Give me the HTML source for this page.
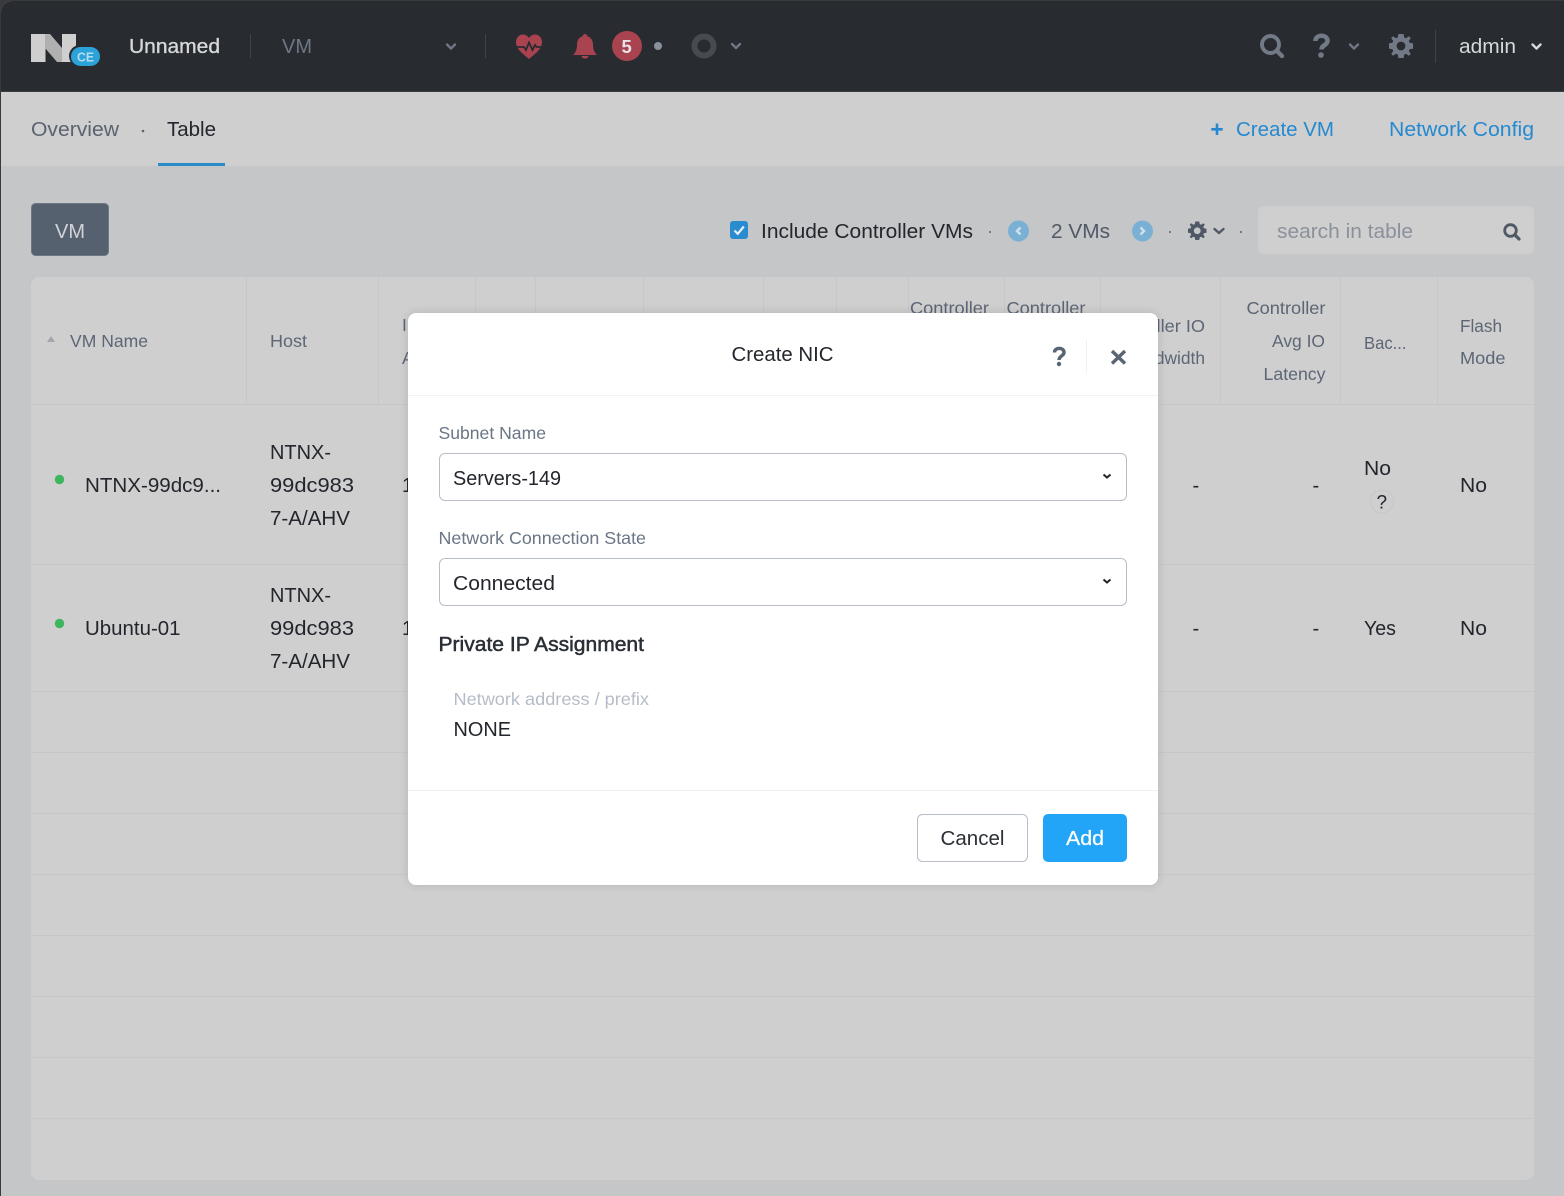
<!DOCTYPE html>
<html><head><meta charset="utf-8"><title>Create NIC</title>
<style>
html,body{margin:0;padding:0;background:#3a3a3c;width:1564px;height:1196px;overflow:hidden}
svg{display:block}
text{font-family:"Liberation Sans",sans-serif;font-size:20px;fill:#23262c;white-space:pre}
.h{font-size:17.5px;fill:#5c6675}
.l{font-size:17.5px;fill:#6a7686}
.c{fill:none;stroke-width:2.4;stroke-linecap:round;stroke-linejoin:round}
</style></head><body>
<svg width="1564" height="1196" viewBox="0 0 1564 1196" xmlns="http://www.w3.org/2000/svg">
<defs>
<clipPath id="win"><rect x="1" y="1" width="1573" height="1205" rx="11"/></clipPath>
<symbol id="gear" viewBox="-12 -12 24 24" overflow="visible">
<path fill-rule="evenodd" d="M-2.6-12H2.6L3.2-8.6 5.1-7.8 7.9-9.8 9.8-7.9 7.8-5.1 8.6-3.2 12-2.6V2.6L8.6 3.2 7.8 5.1 9.8 7.9 7.9 9.8 5.1 7.8 3.2 8.6 2.6 12H-2.6L-3.2 8.6-5.1 7.8-7.9 9.8-9.8 7.9-7.8 5.1-8.6 3.2-12 2.6V-2.6L-8.6-3.2-7.8-5.1-9.8-7.9-7.9-9.8-5.1-7.8-3.2-8.6ZM0-4.4A4.4 4.4 0 1 0 0 4.4 4.4 4.4 0 1 0 0-4.4Z"/>
</symbol>
</defs>
<g clip-path="url(#win)">
<rect width="1564" height="1196" fill="#c5c6c8"/>
<!-- top bar -->
<rect width="1564" height="92" fill="#282b30"/>
<rect y="91" width="1564" height="1" fill="#3a3e44"/>
<!-- logo -->
<rect x="31" y="34" width="14.500" height="28" fill="#cfcfcf"/>
<rect x="62" y="34" width="14" height="28" fill="#cfcfcf"/>
<path d="M45 34H50L62 48V62H57L45 48Z" fill="#b0b0b0"/>
<rect x="69" y="45" width="33" height="22" rx="11" fill="#282b30"/>
<rect x="71" y="47" width="29" height="19" rx="9.5" fill="#2ba3d8"/>
<text x="77" y="61.500" style="font-size:12.500px;fill:#b4dcef;font-weight:bold" textLength="17" lengthAdjust="spacingAndGlyphs">CE</text>
<text x="129" y="53" textLength="91" lengthAdjust="spacingAndGlyphs" style="fill:#d6d8db;stroke:#d6d8db;stroke-width:.35">Unnamed</text>
<rect x="250" y="34" width="1" height="24" fill="#3f434a"/>
<text x="282" y="53" textLength="30" lengthAdjust="spacingAndGlyphs" style="fill:#6f7785">VM</text>
<path class="c" d="M447 44.500L451 48.500 455 44.500" stroke="#6f7785"/>
<rect x="485" y="34" width="1" height="24" fill="#3f434a"/>
<!-- heart -->
<path d="M529 59C522 53 516 49 516 42 516 37.500 519.500 34.500 523 34.500 525.500 34.500 527.800 36 529 38 530.200 36 532.500 34.500 535 34.500 538.500 34.500 542 37.500 542 42 542 49 536 53 529 59Z" fill="#a94350"/>
<path d="M515 47H524L526 50 529 42.500 532.500 50 535 45 536.500 47H543" fill="none" stroke="#282b30" stroke-width="1.800"/>
<!-- bell -->
<path d="M573 55C575.500 52.500 577 50 577 44.500 577 40 579.500 37 582.700 36.300 582.700 34.800 583.700 34 585 34 586.300 34 587.300 34.800 587.300 36.300 590.500 37 593 40 593 44.500 593 50 594.500 52.500 597 55Z" fill="#a94350"/>
<path d="M581.500 56H588.500C588 59.500 582 59.500 581.500 56Z" fill="#a94350"/>
<circle cx="627" cy="46" r="15" fill="#a94350"/>
<text x="621.500" y="53" style="font-weight:bold;font-size:18.500px;fill:#e6e4e4">5</text>
<circle cx="658" cy="46" r="4" fill="#8a919c"/>
<circle cx="704" cy="46" r="9.500" fill="none" stroke="#474b51" stroke-width="6"/>
<path class="c" d="M732 44L736 48 740 44" stroke="#6f7785"/>
<!-- right icons -->
<circle cx="1270.500" cy="44.500" r="8.500" fill="none" stroke="#737a87" stroke-width="3.900"/>
<path d="M1277 51L1282 56" stroke="#737a87" stroke-width="4.400" stroke-linecap="round"/>
<path d="M1315.500 41C1315.500 34 1327.500 34 1327.500 41 1327.500 45 1321.500 45 1321.500 49.500" fill="none" stroke="#737a87" stroke-width="4.600"/>
<circle cx="1321" cy="55" r="2.800" fill="#737a87"/>
<path class="c" d="M1350 44.500L1354 48.500 1358 44.500" stroke="#6f7785"/>
<use href="#gear" x="1389" y="34" width="24" height="24" fill="#737a87"/>
<rect x="1435" y="30" width="1" height="33" fill="#3f434a"/>
<text x="1459" y="53" textLength="57" lengthAdjust="spacingAndGlyphs" style="fill:#d6d8db">admin</text>
<path class="c" d="M1532.500 44.500L1536.500 48.500 1540.500 44.500" stroke="#d6d8db"/>
<!-- sub bar -->
<rect y="92" width="1564" height="74" fill="#cfcfcf"/>
<text x="31" y="136" textLength="88" lengthAdjust="spacingAndGlyphs" style="fill:#5a6370">Overview</text>
<circle cx="143" cy="131" r="1.300" fill="#5a6370"/>
<text x="167" y="136" textLength="49" lengthAdjust="spacingAndGlyphs">Table</text>
<rect x="158" y="163" width="67" height="3" fill="#2a8cca"/>
<path d="M1217 123.500V135M1211.300 129.300H1222.700" stroke="#2589cf" stroke-width="2.600"/>
<text x="1236" y="136" textLength="98" lengthAdjust="spacingAndGlyphs" style="fill:#2589cf">Create VM</text>
<text x="1389" y="136" textLength="145" lengthAdjust="spacingAndGlyphs" style="fill:#2589cf">Network Config</text>
<!-- toolbar -->
<rect x="31.500" y="203.500" width="77" height="52" rx="4" fill="#566170" stroke="#6d7785"/>
<text x="55" y="238" textLength="30" lengthAdjust="spacingAndGlyphs" style="fill:#d0d3d7">VM</text>
<rect x="730" y="221" width="18" height="18" rx="3" fill="#2a8cd0"/>
<path d="M734.500 230.500L737.800 233.800 743.800 226.500" fill="none" stroke="#e8f1f8" stroke-width="2.200"/>
<text x="761" y="238" textLength="212" lengthAdjust="spacingAndGlyphs">Include Controller VMs</text>
<circle cx="990" cy="232" r="1" fill="#5a6370"/>
<circle cx="1018.500" cy="231" r="10.500" fill="#7ab0d4"/>
<path d="M1020.500 227.500L1017 231 1020.500 234.500" fill="none" stroke="#cfe0ec" stroke-width="2.400"/>
<text x="1051" y="238" textLength="59" lengthAdjust="spacingAndGlyphs" style="fill:#505966">2 VMs</text>
<circle cx="1142.500" cy="231" r="10.500" fill="#7ab0d4"/>
<path d="M1140.500 227.500L1144 231 1140.500 234.500" fill="none" stroke="#cfe0ec" stroke-width="2.400"/>
<circle cx="1170" cy="232" r="1" fill="#5a6370"/>
<use href="#gear" x="1188" y="221.500" width="18.500" height="18.500" fill="#4f5865"/>
<path class="c" d="M1214.500 229L1219 233 1223.500 229" stroke="#4f5865"/>
<circle cx="1241" cy="232" r="1" fill="#5a6370"/>
<rect x="1258" y="206" width="276" height="48" rx="6" fill="#cfcfcf"/>
<text x="1277" y="238" textLength="136" lengthAdjust="spacingAndGlyphs" style="fill:#8b919b">search in table</text>
<circle cx="1510.500" cy="230.500" r="5.800" fill="none" stroke="#4f5865" stroke-width="2.800"/>
<path d="M1515 235L1519 239" stroke="#4f5865" stroke-width="3.200" stroke-linecap="round"/>
<!-- table -->
<rect x="31" y="277" width="1503" height="903" rx="8" fill="#cfcfcf"/>
<g fill="#c7c7c7">
<rect x="31" y="404" width="1503" height="1"/>
<rect x="31" y="564" width="1503" height="1"/>
<rect x="31" y="691" width="1503" height="1"/>
<rect x="31" y="752" width="1503" height="1"/>
<rect x="31" y="813" width="1503" height="1"/>
<rect x="31" y="874" width="1503" height="1"/>
<rect x="31" y="935" width="1503" height="1"/>
<rect x="31" y="996" width="1503" height="1"/>
<rect x="31" y="1057" width="1503" height="1"/>
<rect x="31" y="1118" width="1503" height="1"/>
<rect x="246" y="277" width="1" height="127"/>
<rect x="378" y="277" width="1" height="127"/>
<rect x="475" y="277" width="1" height="127"/>
<rect x="535" y="277" width="1" height="127"/>
<rect x="643" y="277" width="1" height="127"/>
<rect x="763" y="277" width="1" height="127"/>
<rect x="836" y="277" width="1" height="127"/>
<rect x="908" y="277" width="1" height="127"/>
<rect x="1004" y="277" width="1" height="127"/>
<rect x="1100" y="277" width="1" height="127"/>
<rect x="1220" y="277" width="1" height="127"/>
<rect x="1340" y="277" width="1" height="127"/>
<rect x="1437" y="277" width="1" height="127"/>
</g>
<path d="M47 342L51 336 55 342Z" fill="#a2a5aa"/>
<text class="h" x="70" y="347" textLength="78" lengthAdjust="spacingAndGlyphs">VM Name</text>
<text class="h" x="270" y="347" textLength="37" lengthAdjust="spacingAndGlyphs">Host</text>
<text class="h" x="402" y="331">IP</text>
<text class="h" x="402" y="364">Ad</text>
<text class="h" x="910" y="314" textLength="79" lengthAdjust="spacingAndGlyphs">Controller</text>
<text class="h" x="1006.500" y="314" textLength="79" lengthAdjust="spacingAndGlyphs">Controller</text>
<text class="h" x="1102" y="332" textLength="103" lengthAdjust="spacingAndGlyphs">Controller IO</text>
<text class="h" x="1124" y="364" textLength="81" lengthAdjust="spacingAndGlyphs">Bandwidth</text>
<text class="h" x="1246.500" y="314" textLength="79" lengthAdjust="spacingAndGlyphs">Controller</text>
<text class="h" x="1272" y="347" textLength="53" lengthAdjust="spacingAndGlyphs">Avg IO</text>
<text class="h" x="1263.500" y="380" textLength="62" lengthAdjust="spacingAndGlyphs">Latency</text>
<text class="h" x="1364" y="349" textLength="42.500" lengthAdjust="spacingAndGlyphs">Bac...</text>
<text class="h" x="1460" y="332" textLength="42" lengthAdjust="spacingAndGlyphs">Flash</text>
<text class="h" x="1460" y="364" textLength="45.500" lengthAdjust="spacingAndGlyphs">Mode</text>
<!-- row 1 -->
<circle cx="59.500" cy="479.500" r="4.700" fill="#3cb55e"/>
<text x="85" y="492" textLength="136" lengthAdjust="spacingAndGlyphs">NTNX-99dc9...</text>
<text x="270" y="459" textLength="61" lengthAdjust="spacingAndGlyphs">NTNX-</text>
<text x="270" y="492" textLength="84" lengthAdjust="spacingAndGlyphs">99dc983</text>
<text x="270" y="525" textLength="80" lengthAdjust="spacingAndGlyphs">7-A/AHV</text>
<text x="402" y="492">1</text>
<text x="1192.500" y="492">-</text>
<text x="1312.500" y="492">-</text>
<text x="1364" y="475" textLength="27" lengthAdjust="spacingAndGlyphs">No</text>
<circle cx="1382" cy="501.500" r="11.500" fill="none" stroke="#c7c7c7"/>
<text x="1376.500" y="508.500" style="font-size:19px">?</text>
<text x="1460" y="492" textLength="27" lengthAdjust="spacingAndGlyphs">No</text>
<!-- row 2 -->
<circle cx="59.500" cy="623.500" r="4.700" fill="#3cb55e"/>
<text x="85" y="635" textLength="95.500" lengthAdjust="spacingAndGlyphs">Ubuntu-01</text>
<text x="270" y="602" textLength="61" lengthAdjust="spacingAndGlyphs">NTNX-</text>
<text x="270" y="635" textLength="84" lengthAdjust="spacingAndGlyphs">99dc983</text>
<text x="270" y="668" textLength="80" lengthAdjust="spacingAndGlyphs">7-A/AHV</text>
<text x="402" y="635">1</text>
<text x="1192.500" y="635">-</text>
<text x="1312.500" y="635">-</text>
<text x="1364" y="635" textLength="32" lengthAdjust="spacingAndGlyphs">Yes</text>
<text x="1460" y="635" textLength="27" lengthAdjust="spacingAndGlyphs">No</text>
</g>
<!-- modal -->
<rect x="408" y="313" width="750" height="572" rx="8" fill="#000" opacity=".12" style="filter:blur(5px)"/>
<rect x="408" y="313" width="750" height="572" rx="8" fill="#fff"/>
<text x="731.500" y="361" textLength="102" lengthAdjust="spacingAndGlyphs">Create NIC</text>
<path d="M1054.500 352.500C1054.500 347 1064 347 1064 352.500 1064 356 1059 355.800 1059 360" fill="none" stroke="#5a6574" stroke-width="3.500"/>
<circle cx="1059" cy="364" r="2.200" fill="#5a6574"/>
<rect x="1086" y="340" width="1" height="33" fill="#eef0f2"/>
<path d="M1112 351L1125 363.500M1125 351L1112 363.500" stroke="#5a6574" stroke-width="3.400"/>
<rect x="408" y="395" width="750" height="1" fill="#f1f2f4"/>
<text class="l" x="438.500" y="439" textLength="107.500" lengthAdjust="spacingAndGlyphs">Subnet Name</text>
<rect x="439.500" y="453.500" width="687" height="47" rx="5.500" fill="#fff" stroke="#b8bdca"/>
<text x="453" y="485" textLength="108" lengthAdjust="spacingAndGlyphs">Servers-149</text>
<path d="M1103.500 474.500L1107 477.500 1110.500 474.500" fill="none" stroke="#23262c" stroke-width="2"/>
<text class="l" x="438.500" y="544" textLength="207.500" lengthAdjust="spacingAndGlyphs">Network Connection State</text>
<rect x="439.500" y="558.500" width="687" height="47" rx="5.500" fill="#fff" stroke="#b8bdca"/>
<text x="453" y="590" textLength="102" lengthAdjust="spacingAndGlyphs">Connected</text>
<path d="M1103.500 579.500L1107 582.500 1110.500 579.500" fill="none" stroke="#23262c" stroke-width="2"/>
<text x="438.500" y="651" textLength="205.500" lengthAdjust="spacingAndGlyphs" style="fill:#2b2f36;stroke:#2b2f36;stroke-width:.5">Private IP Assignment</text>
<text x="453.500" y="705" textLength="195.500" lengthAdjust="spacingAndGlyphs" style="font-size:17.500px;fill:#b6bcc8">Network address / prefix</text>
<text x="453.500" y="736" textLength="57.500" lengthAdjust="spacingAndGlyphs">NONE</text>
<rect x="408" y="790" width="750" height="1" fill="#eff0f2"/>
<rect x="917.500" y="814.500" width="110" height="47" rx="5" fill="#fff" stroke="#b8bdca"/>
<text x="940.500" y="845" textLength="64" lengthAdjust="spacingAndGlyphs" style="fill:#2b2f36">Cancel</text>
<rect x="1043" y="814" width="84" height="48" rx="5" fill="#22a5f7"/>
<text x="1066" y="845" textLength="38" lengthAdjust="spacingAndGlyphs" style="fill:#fff;stroke:#fff;stroke-width:.25">Add</text>
</svg>
</body></html>
